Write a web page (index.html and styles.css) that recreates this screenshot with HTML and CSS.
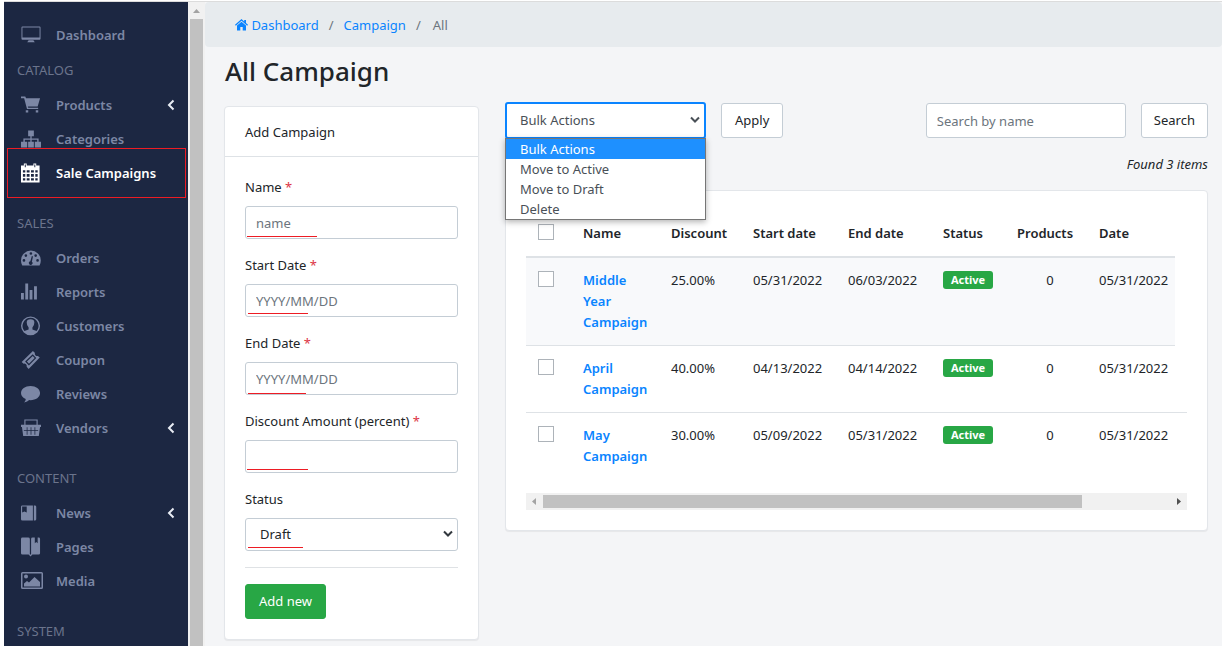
FILE: index.html
```html
<!DOCTYPE html>
<html lang="en">
<head>
<meta charset="utf-8">
<title>All Campaign</title>
<link rel="stylesheet" href="styles.css">
</head>
<body>
<div class="app">
  <nav class="sidebar">
    <a class="nav-item" href="#"><svg class="icon" viewBox="0 0 21 20"><path fill-rule="evenodd" d="M1.500 1h18q1 0 1 1v12q0 1-1 1h-18q-1 0-1-1V2q0-1 1-1zM1.500 2v10.500h18V2zM8 15.500h5l1.500 2h-8z"/></svg><span>Dashboard</span></a>
    <h2 class="nav-heading nav-heading-first">CATALOG</h2>
    <a class="nav-item" href="#"><svg class="icon" viewBox="0 0 21 20"><path d="M0 1h4.500l.8 2H20l-2.500 8.500H7.200l.4 1.300H18V14.200H6.300L3.300 2.800H0zM5 15.500h2.600V18H5zM15.500 15.500h2.600V18h-2.600z"/></svg><span>Products</span><svg class="caret" viewBox="0 0 8 12"><path d="M6.500 1.500 2 6l4.500 4.500"/></svg></a>
    <a class="nav-item" href="#"><svg class="icon" viewBox="0 0 21 20"><path d="M7.500 1h6v6h-2.300v2.500h7.300V13H21v6h-6.500v-6h2.500v-2.200h-5.800V13h2.300v6h-6v-6h2.300v-2.200H4V13h2.500v6H0v-6h2.500V9.500h7.300V7H7.500z"/></svg><span>Categories</span></a>
    <a class="nav-item nav-item-active" href="#"><svg class="icon" viewBox="0 0 21 20"><path fill-rule="evenodd" d="M3 0h3v2h7V0h3v2h3.500v18H0V2h3zM2 7v2.500h2.500V7zM6 7v2.500h3V7zM10.500 7v2.500h3V7zM15 7v2.500h2.500V7zM2 11v3h2.500v-3zM6 11v3h3v-3zM10.500 11v3h3v-3zM15 11v3h2.500v-3zM2 15.500V18h2.500v-2.500zM6 15.500V18h3v-2.500zM10.500 15.500V18h3v-2.500zM15 15.500V18h2.500v-2.500zM4 1v3h1V1zM14 1v3h1V1z"/></svg><span>Sale Campaigns</span></a>

    <h2 class="nav-heading">SALES</h2>
    <a class="nav-item" href="#"><svg class="icon" viewBox="0 0 21 20"><path fill-rule="evenodd" d="M0 12.500a10.400 10.400 0 0 1 20.800 0q0 2.500-1.300 5.500H1.300Q0 15 0 12.500zM1.700 12.500a1.400 1.400 0 1 0 2.800 0 1.400 1.400 0 1 0-2.800 0zM3.700 7.500a1.400 1.400 0 1 0 2.800 0 1.400 1.400 0 1 0-2.800 0zM9 5.300a1.400 1.400 0 1 0 2.800 0 1.400 1.400 0 1 0-2.800 0zM14 7.500a1.400 1.400 0 1 0 2.800 0 1.400 1.400 0 1 0-2.800 0zM16 12.500a1.400 1.400 0 1 0 2.800 0 1.400 1.400 0 1 0-2.800 0zM11.400 8l-1.600 5.500a1.900 1.900 0 1 0 1.600.4L12.600 8.400z"/></svg><span>Orders</span></a>
    <a class="nav-item" href="#"><svg class="icon" viewBox="0 0 21 20"><path d="M0 11h3v7H0zM4.500 1h3v17h-3zM9 8h3v10H9zM13.700 4h3v14h-3z"/></svg><span>Reports</span></a>
    <a class="nav-item" href="#"><svg class="icon" viewBox="0 0 21 20"><path fill-rule="evenodd" d="M10 0a10 9.800 0 1 1 0 19.600A10 9.800 0 0 1 10 0zM10 1.300A8.500 8.500 0 0 0 3.600 15.200L8 13.800v-2.300Q6 9.500 6 6.200 6 2.800 10 2.800t4 3.400q0 3.300-2 5.300v2.300l4.400 1.400A8.500 8.500 0 0 0 10 1.300z"/></svg><span>Customers</span></a>
    <a class="nav-item" href="#"><svg class="icon" viewBox="0 0 21 20"><path fill-rule="evenodd" d="M12.500.5l2 2q-.3 1.800.8 2.700t2.500.6l1.900 1.700L8 19.500l-2-2.300q.3-1.700-.8-2.700t-2.500-.6L.7 12zM12.300 4l-8 7.700 4 4L16 8zM12.300 5.700 14.400 8l-6 6L6.200 11.700z"/></svg><span>Coupon</span></a>
    <a class="nav-item" href="#"><svg class="icon" viewBox="0 0 21 20"><path d="M10 1.500C15.600 1.500 20 4.600 20 9s-4.400 7.500-10 7.500l-1.400-.1Q6.800 18.600 3.300 18.800q1.700-1.600 1.700-3.500C2 14 0 12 0 9c0-4.400 4.400-7.500 10-7.500z"/></svg><span>Reviews</span></a>
    <a class="nav-item" href="#"><svg class="icon" viewBox="0 0 21 20"><path fill-rule="evenodd" d="M3.500 1h14v5.500H21V9h-1l-1.300 9.500H2.300L1 9H0V6.500h3.500zM4.700 2.200v4.300h11.600V2.200zM6 9.200v8h.8v-8zM10.100 9.200v8h.8v-8zM14.200 9.200v8h.8v-8zM3 12v.8h3V12zM6.800 12v.8h3.300V12zM10.900 12v.8h3.300V12zM15 12v.8h3V12z"/></svg><span>Vendors</span><svg class="caret" viewBox="0 0 8 12"><path d="M6.500 1.500 2 6l4.500 4.500"/></svg></a>

    <h2 class="nav-heading">CONTENT</h2>
    <a class="nav-item" href="#"><svg class="icon" viewBox="0 0 21 20"><path fill-rule="evenodd" d="M1.500 2H12.500v16h-11Q0 18 0 16.500v-13Q0 2 1.500 2zM1.200 3.200V9.500l2.400-1L6 9.500V3.200zM13.500 2h1q1.500 0 1.500 1.500v13q0 1.500-1.500 1.500h-1z"/></svg><span>News</span><svg class="caret" viewBox="0 0 8 12"><path d="M6.500 1.500 2 6l4.500 4.500"/></svg></a>
    <a class="nav-item" href="#"><svg class="icon" viewBox="0 0 21 20"><path d="M1.500 0h6Q9.300 0 9.300 1.500V18H1.500Q0 18 0 16.500v-15Q0 0 1.500 0zM10.600 1.500q0-1.500 1.500-1.500H14.500v6l1.500-1.300L17.500 6V0h1q1.500 0 1.500 1.500v15q0 1.500-1.500 1.500h-7.900zM8 18h4l-2 2z"/></svg><span>Pages</span></a>
    <a class="nav-item" href="#"><svg class="icon icon-wide" viewBox="0 0 22 20"><path fill-rule="evenodd" d="M1.500 1h19Q22 1 22 2.500v14q0 1.500-1.500 1.500h-19Q0 18 0 16.500v-14Q0 1 1.500 1zM1.500 2.500v14h19v-14zM3 5.500a2 2 0 1 1 4 0 2 2 0 1 1-4 0zM3 15.500v-3l3-2.500 2 1.500L13.500 6 19 11v4.500z"/></svg><span>Media</span></a>

    <h2 class="nav-heading">SYSTEM</h2>
  </nav>

  <div class="side-scroll">
    <svg class="arrow-up" viewBox="0 0 17 17"><path d="M5 11h7L8.500 7z"/></svg>
    <div class="side-thumb"></div>
  </div>

  <main class="main">
    <nav class="breadcrumb">
      <a href="#"><svg class="home" viewBox="0 0 13 12"><path d="M6.500 0 0 5.800l.8.9L6.500 1.800l5.700 4.900.8-.9-2-1.800V1H9.200v1.400zM6.500 2.800 2 6.600V11.500h3.300V8h2.400v3.500H11V6.600z"/></svg> Dashboard</a>
      <span>/</span>
      <a href="#">Campaign</a>
      <span>/</span>
      <span class="crumb-current">All</span>
    </nav>

    <div class="content">
      <h1 class="title">All Campaign</h1>
      <div class="columns">
        <section class="card form-card">
          <h2 class="card-header">Add Campaign</h2>
          <form class="card-body">
            <div class="group"><label for="name">Name <b class="req">*</b></label>
              <div class="field"><input class="control" id="name" type="text" placeholder="name"><i class="mark mark-name"></i></div></div>
            <div class="group"><label for="start">Start Date <b class="req">*</b></label>
              <div class="field"><input class="control" id="start" type="text" placeholder="YYYY/MM/DD"><i class="mark mark-start"></i></div></div>
            <div class="group"><label for="end">End Date <b class="req">*</b></label>
              <div class="field"><input class="control" id="end" type="text" placeholder="YYYY/MM/DD"><i class="mark mark-end"></i></div></div>
            <div class="group"><label for="amount">Discount Amount (percent) <b class="req">*</b></label>
              <div class="field"><input class="control" id="amount" type="text"><i class="mark mark-amount"></i></div></div>
            <div class="group"><label for="status">Status</label>
              <div class="field"><select class="control select" id="status"><option>Draft</option><option>Active</option></select><svg class="chevron" viewBox="0 0 10 8"><path d="M1 1.500 5 5.500 9 1.500"/></svg><i class="mark mark-status"></i></div></div>
            <hr class="rule">
            <button class="btn btn-success" type="button">Add new</button>
          </form>
        </section>

        <section class="list">
          <div class="toolbar">
            <div class="bulk">
              <select class="control select bulk-select" aria-label="Bulk Actions"><option>Bulk Actions</option><option>Move to Active</option><option>Move to Draft</option><option>Delete</option></select>
              <svg class="chevron" viewBox="0 0 10 8"><path d="M1 1.500 5 5.500 9 1.500"/></svg>
              <ul class="menu" role="listbox">
                <li class="menu-item menu-item-on" role="option">Bulk Actions</li>
                <li class="menu-item" role="option">Move to Active</li>
                <li class="menu-item" role="option">Move to Draft</li>
                <li class="menu-item" role="option">Delete</li>
              </ul>
            </div>
            <button class="btn btn-white" type="button">Apply</button>
            <input class="control search" type="search" placeholder="Search by name" aria-label="Search by name">
            <button class="btn btn-white btn-search" type="button">Search</button>
          </div>
          <p class="found">Found 3 items</p>
          <div class="card table-card">
            <div class="table-wrap">
              <table class="table">
                <colgroup><col class="c-check"><col><col class="c-discount"><col class="c-day"><col class="c-day"><col class="c-status"><col class="c-products"><col class="c-date"><col class="c-end"></colgroup>
                <thead>
                  <tr><th><input class="check" type="checkbox" aria-label="Select all"></th><th>Name</th><th>Discount</th><th>Start date</th><th>End date</th><th>Status</th><th>Products</th><th>Date</th></tr>
                </thead>
                <tbody>
                  <tr class="striped"><td><input class="check" type="checkbox" aria-label="Select Middle Year Campaign"></td><td><a href="#">Middle Year Campaign</a></td><td>25.00%</td><td>05/31/2022</td><td>06/03/2022</td><td><span class="badge">Active</span></td><td class="count">0</td><td>05/31/2022</td></tr>
                  <tr><td><input class="check" type="checkbox" aria-label="Select April Campaign"></td><td><a href="#">April Campaign</a></td><td>40.00%</td><td>04/13/2022</td><td>04/14/2022</td><td><span class="badge">Active</span></td><td class="count">0</td><td colspan="2">05/31/2022</td></tr>
                  <tr class="last"><td><input class="check" type="checkbox" aria-label="Select May Campaign"></td><td><a href="#">May Campaign</a></td><td>30.00%</td><td>05/09/2022</td><td>05/31/2022</td><td><span class="badge">Active</span></td><td class="count">0</td><td colspan="2">05/31/2022</td></tr>
                </tbody>
              </table>
            </div>
            <div class="h-scroll">
              <svg class="arrow-left" viewBox="0 0 17 17"><path d="M10 5v7L6 8.500z"/></svg>
              <div class="h-track"><div class="h-thumb"></div></div>
              <svg class="arrow-right" viewBox="0 0 17 17"><path d="M7 5v7l4-3.500z"/></svg>
            </div>
          </div>
        </section>
      </div>
    </div>
  </main>
</div>
</body>
</html>
```
FILE: styles.css
```css
* { box-sizing: border-box; }

body {
  margin: 0;
  background: #fff;
  color: #212529;
  font: 13px/21px "Noto Sans", "Open Sans", sans-serif;
}

h1, h2, p, ul { margin: 0; padding: 0; }
a { color: #0a84ff; text-decoration: none; }
button, input, select { font: inherit; color: inherit; margin: 0; }

.app {
  display: flex;
  height: 100vh;
  overflow: hidden;
  padding: 1px 2px 0 4px;
}

.sidebar, .side-scroll, .main { border-top: 1px solid #dcdcdc; }

/* Sidebar */
.sidebar {
  flex: none;
  width: 184px;
  padding-top: 16px;
  background: #1c2742;
  overflow: hidden;
}

.nav-item {
  position: relative;
  display: flex;
  align-items: center;
  gap: 15px;
  height: 34px;
  padding: 0 13px 0 17px;
  color: #7c87a5;
  font-weight: 600;
}

.nav-item-active { color: #fff; }

.nav-item-active::after {
  content: "";
  position: absolute;
  inset: -8px 2px -8px 3px;
  border: 1px solid #ed1c24;
}

.nav-heading {
  height: 35px;
  margin-top: 16px;
  padding-left: 13px;
  color: #6b748c;
  font-size: 13px;
  font-weight: 400;
  line-height: 35px;
}

.nav-heading-first { height: 36px; margin-top: 0; line-height: 36px; }

.icon { flex: none; width: 20px; height: 20px; fill: currentColor; }
.icon-wide { width: 22px; margin-right: -2px; }

.caret {
  width: 8px;
  height: 12px;
  margin-left: auto;
  fill: none;
  stroke: #e8ecf4;
  stroke-width: 2;
}

.side-scroll {
  flex: none;
  display: flex;
  flex-direction: column;
  width: 17px;
  background: #f1f1f1;
}

.arrow-up { flex: none; width: 17px; height: 17px; fill: #a3a3a3; }
.side-thumb { flex: 1; margin: 0 2px; background: #c1c1c1; }

/* Main area */
.main { flex: 1; min-width: 0; background: #f4f5f7; }

.breadcrumb {
  display: flex;
  gap: 10px;
  padding: 13px 30px 11px;
  border-radius: 4px;
  background: #e7ebee;
  color: #6c757d;
}

.crumb-current { padding-left: 2px; }
.home { width: 13px; height: 12px; fill: currentColor; vertical-align: -1px; }

.content { padding: 7px 14px 0 19px; }

.title {
  padding-left: 1px;
  font-size: 26px;
  font-weight: 500;
  line-height: 34px;
}

.columns {
  display: grid;
  grid-template-columns: 255px minmax(0, 1fr);
  align-items: start;
  gap: 26px;
  padding-top: 14px;
}

.card {
  border: 1px solid #e3e6ea;
  border-radius: 4px;
  background: #fff;
  box-shadow: 0 1px 1px rgba(0, 0, 0, .06);
}

.form-card { margin-top: 4px; }

.card-header {
  padding: 15px 20px 13px;
  border-bottom: 1px solid #dee2e6;
  font-size: 13px;
  font-weight: 400;
}

.card-body { padding: 20px; }
.group { margin-bottom: 16px; }
.group label { display: block; margin-bottom: 8px; }
.req { color: #dc3545; font-weight: 400; }
.field { position: relative; }

.control {
  display: block;
  width: 100%;
  height: 33px;
  padding: 0 10px;
  border: 1px solid #c4cdd5;
  border-radius: 3px;
  background: #fff;
  outline: 0;
}

.control::placeholder { color: #6c757d; opacity: 1; }
.select { appearance: none; padding-left: 14px; }

.chevron {
  position: absolute;
  top: 12px;
  right: 5px;
  width: 10px;
  height: 8px;
  fill: none;
  stroke: #32383e;
  stroke-width: 2;
}

/* Red annotation strokes drawn over the fields */
.mark {
  position: absolute;
  left: 3px;
  bottom: 2px;
  width: 60px;
  height: 1px;
  background: #ed1c24;
}

.mark-name { left: 2px; width: 70px; }
.mark-start { bottom: 3px; }
.mark-end { bottom: 1px; width: 58px; }
.mark-amount { left: 2px; bottom: 3px; width: 61px; }
.mark-status { bottom: 3px; width: 55px; }

.rule { margin: 0 0 16px; border: 0; border-top: 1px solid #dfe2e5; }

.btn {
  height: 35px;
  padding: 0 13px;
  border: 1px solid #c4cdd5;
  border-radius: 3px;
}

.btn-white { background: #fff; }
.btn-search { padding: 0 12px; }
.btn-success { display: block; border-color: #28a745; background: #28a745; color: #fff; }

/* Toolbar */
.toolbar { display: flex; align-items: center; gap: 15px; }
.bulk { position: relative; width: 201px; color: #495057; }
.bulk .chevron { top: 14px; right: 6px; stroke: #495057; }
.bulk-select { height: 37px; padding-left: 13px; border: 2px solid #0a84ff; }
.search { width: 200px; height: 35px; margin-left: auto; appearance: none; }

.menu {
  position: absolute;
  top: 36px;
  left: 0;
  right: 0;
  z-index: 2;
  border: 1px solid #767676;
  background: #fff;
  box-shadow: 0 2px 6px rgba(0, 0, 0, .3);
  list-style: none;
}

.menu-item { padding-left: 14px; line-height: 20px; }
.menu-item-on { background: #1e90ff; color: #fff; }

.found { padding: 15px 0; text-align: right; font-style: italic; }

/* Table */
.table-card { padding: 20px; }
.table-wrap { overflow: hidden; }
.table { width: 100%; border-collapse: separate; border-spacing: 0; table-layout: fixed; }
.c-check { width: 45px; }
.c-discount, .c-products { width: 82px; }
.c-day { width: 95px; }
.c-status { width: 74px; }
.c-date { width: 88px; }
.c-end { width: 12px; }

.table th, .table td {
  padding: 12px 0 12px 12px;
  text-align: left;
  vertical-align: top;
}

.table th { border-bottom: 2px solid #dee2e6; font-weight: 600; }
.table td { border-bottom: 1px solid #dee2e6; }
.table a { display: block; padding-right: 8px; font-weight: 600; }
.table .striped td { background: #f8f9fb; }
.table .last td { border-bottom: 0; }
.table .count { padding-left: 8px; padding-right: 0; text-align: center; }

.check {
  appearance: none;
  display: block;
  width: 16px;
  height: 16px;
  margin-top: 1px;
  border: 1px solid #adb3b9;
  background: #fff;
}

.badge {
  display: block;
  width: 50px;
  margin-top: 1px;
  border-radius: 3px;
  background: #28a745;
  color: #fff;
  font-size: 11px;
  font-weight: 700;
  line-height: 18px;
  text-align: center;
}

.h-scroll { display: flex; margin-top: 14px; background: #f1f1f1; }
.arrow-left, .arrow-right { flex: none; width: 17px; height: 17px; fill: #a3a3a3; }
.arrow-right { fill: #505050; }
.h-track { flex: 1; padding: 2px 0; }
.h-thumb { width: 86%; height: 13px; background: #c1c1c1; }
```
